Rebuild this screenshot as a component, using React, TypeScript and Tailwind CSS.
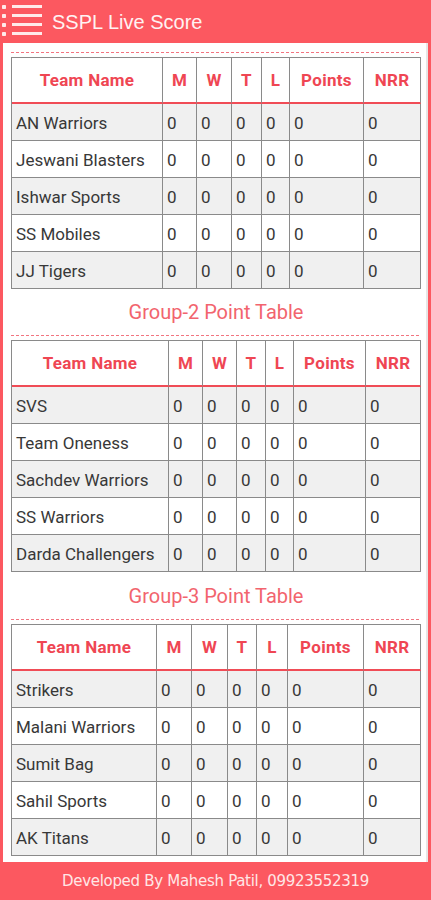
import React from "react";

type Group = {
  title?: string;
  cols: string;
  teams: string[];
};

const groups: Group[] = [
  {
    cols: "grid-cols-[151px_34px_35px_30px_28px_74px_57px]",
    teams: ["AN Warriors", "Jeswani Blasters", "Ishwar Sports", "SS Mobiles", "JJ Tigers"],
  },
  {
    title: "Group-2 Point Table",
    cols: "grid-cols-[157px_34px_34px_29px_28px_72px_55px]",
    teams: ["SVS", "Team Oneness", "Sachdev Warriors", "SS Warriors", "Darda Challengers"],
  },
  {
    title: "Group-3 Point Table",
    cols: "grid-cols-[145px_35px_36px_29px_31px_76px_57px]",
    teams: ["Strikers", "Malani Warriors", "Sumit Bag", "Sahil Sports", "AK Titans"],
  },
];

const headers = ["Team Name", "M", "W", "T", "L", "Points", "NRR"];

function Dashed() {
  return (
    <div className="h-px w-full bg-[linear-gradient(to_right,#f27480_60%,transparent_60%)] bg-[length:5px_1px]" />
  );
}

function PointTable({ g }: { g: Group }) {
  return (
    <div className={`grid ${g.cols} border-l border-t border-[#8a8a8a] font-['Roboto',sans-serif]`}>
      {headers.map((h) => (
        <div
          key={h}
          className="flex h-[46px] items-center justify-center border-r border-b-2 border-r-[#8a8a8a] border-b-[#f04c56] bg-white pt-[2px] text-[17px] font-bold tracking-[0.3px] text-[#ef4653]"
        >
          {h}
        </div>
      ))}
      {g.teams.map((t, i) => {
        const bg = i % 2 === 0 ? "bg-[#f0f0f0]" : "bg-white";
        return (
          <React.Fragment key={t}>
            <div className={`flex h-[37px] items-center whitespace-nowrap border-r border-b border-[#8a8a8a] pl-[4px] pt-[3px] text-[17px] text-[#383838] ${bg}`}>
              {t}
            </div>
            {[0, 1, 2, 3, 4, 5].map((k) => (
              <div
                key={k}
                className={`flex h-[37px] items-center border-r border-b border-[#8a8a8a] pl-[4px] pt-[3px] text-[17px] text-[#383838] ${bg}`}
              >
                0
              </div>
            ))}
          </React.Fragment>
        );
      })}
    </div>
  );
}

export default function App() {
  return (
    <div className="flex h-[900px] w-[431px] flex-col overflow-hidden bg-[#fc5860]">
      <div className="flex h-[43px] shrink-0 items-center">
        <svg width="44" height="43" viewBox="0 0 44 43" className="shrink-0">
          {[5, 14, 23, 32].map((y) => (
            <g key={y} fill="#ffeaea">
              <rect x="2" y={y} width="4" height="4" rx="0.8" />
              <rect x="12" y={y} width="30" height="3" />
            </g>
          ))}
        </svg>
        <span className="ml-[8px] font-['Liberation_Sans',Arial,sans-serif] text-[20px] leading-none text-[#fff2f2]">
          SSPL Live Score
        </span>
      </div>
      <div className="mx-[3px] flex h-[819px] shrink-0 flex-col border-r-2 border-r-[#e6e6e6] bg-white pb-[6px] pl-[8px] pr-[5px] pt-[9px]">
        {groups.map((g, idx) => (
          <div key={idx} className="flex flex-col">
            {g.title && (
              <div
                className={`flex ${idx === 1 ? "h-[46px]" : "h-[47px]"} items-center justify-center font-['Roboto',sans-serif] text-[20px] text-[#f2646e]`}
              >
                {g.title}
              </div>
            )}
            <Dashed />
            <div className="h-[4px]" />
            <PointTable g={g} />
          </div>
        ))}
      </div>
      <div className="flex h-[38px] shrink-0 items-center justify-center font-['DejaVu_Sans',sans-serif] text-[15px] tracking-[-0.3px] text-[#ffe6e6]">
        Developed By Mahesh Patil, 09923552319
      </div>
    </div>
  );
}
